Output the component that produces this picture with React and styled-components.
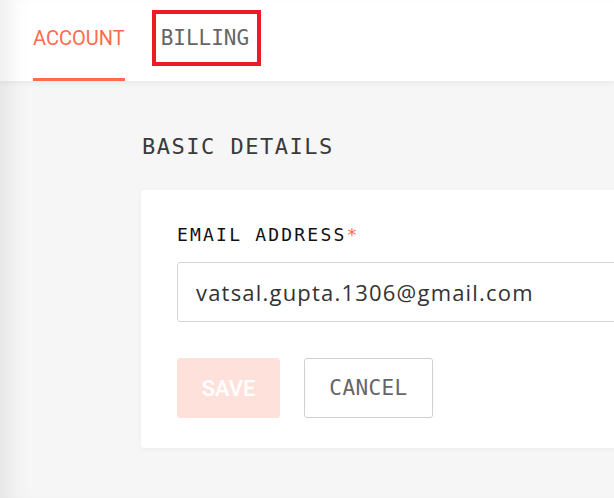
import styled, { createGlobalStyle } from "styled-components";

const GlobalStyle = createGlobalStyle`
  html, body {
    margin: 0;
    padding: 0;
    background: #f6f6f6;
    overflow: hidden;
  }
`;

const Page = styled.div`
  position: relative;
  min-height: 498px;
  width: 614px;
  overflow: hidden;
  background: #f6f6f6;

  &::after {
    content: "";
    position: absolute;
    inset: 0;
    pointer-events: none;
    box-shadow: inset 22px 0 22px -14px rgba(0, 0, 0, 0.08);
  }
`;

const Header = styled.div`
  height: 81px;
  background: #fff;
  display: flex;
  align-items: stretch;
  padding-left: 33px;
  gap: 36px;
  box-shadow: 0 2px 6px rgba(0, 0, 0, 0.06);
`;

const Tab = styled.div`
  display: flex;
  align-items: center;
  position: relative;
  padding-bottom: 2px;
  box-sizing: border-box;
  font-size: ${(p) => (p.$mono ? "21px" : "20px")};
  font-family: ${(p) =>
    p.$mono ? `"DejaVu Sans Mono", monospace` : `Roboto, "Noto Sans", sans-serif`};
  color: ${(p) => (p.$active ? "#ff6b4d" : "#666")};
  border-bottom: 3px solid ${(p) => (p.$active ? "#ff6b4d" : "transparent")};
`;

const Highlight = styled.div`
  position: absolute;
  left: -9px;
  right: -12px;
  top: 10px;
  height: 56px;
  border: 4px solid #ec1c24;
  box-sizing: border-box;
`;

const Content = styled.div`
  padding: 52px 0 0 141px;
`;

const Heading = styled.h2`
  margin: 0 0 29px 1px;
  font-family: "DejaVu Sans Mono", monospace;
  font-weight: normal;
  font-size: 22px;
  letter-spacing: 1.5px;
  color: #3a3a3a;
  line-height: 28px;
`;

const Card = styled.div`
  width: 600px;
  background: #fff;
  border-radius: 3px;
  box-shadow: 0 1px 4px rgba(0, 0, 0, 0.05);
  padding: 34px 36px 30px;
  box-sizing: border-box;
`;

const Label = styled.label`
  display: block;
  font-family: "DejaVu Sans Mono", monospace;
  font-size: 18px;
  letter-spacing: 2.2px;
  color: #111;
  line-height: 22px;
  margin-bottom: 16px;
`;

const Required = styled.span`
  color: #ff6b4d;
`;

const Input = styled.input`
  display: block;
  width: 100%;
  height: 60px;
  box-sizing: border-box;
  border: 1px solid #d6d6d6;
  border-radius: 3px;
  padding: 0 18px;
  font-family: "Open Sans", sans-serif;
  font-size: 22px;
  letter-spacing: 1.2px;
  color: #333;
  outline: none;
`;

const Actions = styled.div`
  display: flex;
  gap: 24px;
  margin-top: 36px;
`;

const Button = styled.button`
  height: 60px;
  box-sizing: border-box;
  border-radius: 3px;
  cursor: pointer;
  padding: 0;
  width: ${(p) => (p.$primary ? "103px" : "129px")};
  font-size: ${(p) => (p.$primary ? "22px" : "21px")};
  font-weight: ${(p) => (p.$primary ? 500 : 400)};
  letter-spacing: ${(p) => (p.$primary ? "0" : "0.4px")};
  font-family: ${(p) =>
    p.$primary ? `Roboto, sans-serif` : `"DejaVu Sans Mono", monospace`};
  background: ${(p) => (p.$primary ? "#ffe1dc" : "#fff")};
  color: ${(p) => (p.$primary ? "#fff" : "#666")};
  border: 1px solid ${(p) => (p.$primary ? "#ffe1dc" : "#cfcfcf")};
`;

export default function App() {
  return (
    <Page>
      <GlobalStyle />
      <Header>
        <Tab $active>ACCOUNT</Tab>
        <Tab $mono>
          BILLING
          <Highlight />
        </Tab>
      </Header>
      <Content>
        <Heading>BASIC DETAILS</Heading>
        <Card>
          <Label>
            EMAIL ADDRESS<Required>*</Required>
          </Label>
          <Input defaultValue="vatsal.gupta.1306@gmail.com" />
          <Actions>
            <Button $primary>SAVE</Button>
            <Button>CANCEL</Button>
          </Actions>
        </Card>
      </Content>
    </Page>
  );
}
